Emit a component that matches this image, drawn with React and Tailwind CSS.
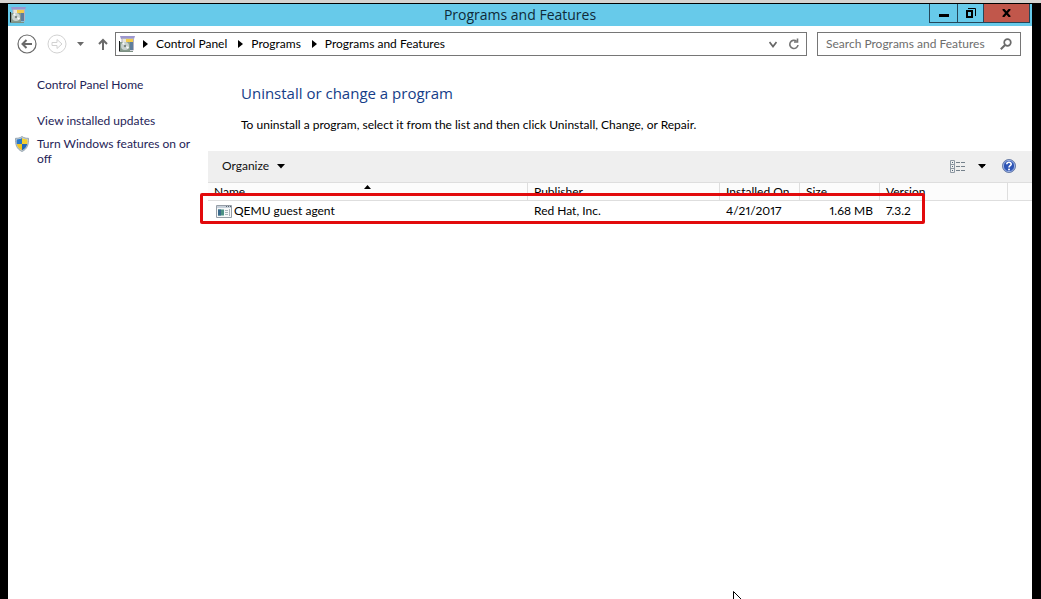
import React from "react";

function ProgramsIcon() {
  return (
    <svg width="16" height="16" viewBox="0 0 16 16" className="shrink-0" aria-hidden="true">
      <path d="M1 0H16L15 3H2Z" fill="#9d97cf" />
      <path d="M3 2.500H14.500V14H3Z" fill="#e9e6da" stroke="#b3b1c2" strokeWidth="1" />
      <path d="M7 3H14V9H7Z" fill="#f2cc4c" />
      <path d="M11 6H14V14H11Z" fill="#5e7d9c" />
      <path d="M1 6H11V15H1Z" fill="#869a8c" />
      <circle cx="6" cy="10" r="4" fill="#c9d2cf" />
      <path d="M6 10L3 7L5 6ZM6 10L10 11L9 13Z" fill="#f7faf8" />
      <circle cx="6" cy="10" r="1.2" fill="#7b8681" />
      <path d="M0.5 5V15.500" fill="none" stroke="#15191a" strokeWidth="1" />
      <path d="M1 15.5H14" stroke="#7c8f82" strokeWidth="1" />
    </svg>
  );
}

function Crumb({ children }) {
  return (
    <>
      <svg width="5" height="8" viewBox="0 0 5 8" className="shrink-0" aria-hidden="true">
        <path d="M0 0L5 4L0 8Z" fill="#000" />
      </svg>
      <a href="#" className="mr-[3px] whitespace-nowrap">{children}</a>
    </>
  );
}

function DownTriangle() {
  return (
    <svg width="8" height="5" viewBox="0 0 8 5" className="shrink-0" aria-hidden="true">
      <path d="M0 0H8L4 4.5Z" fill="#000" />
    </svg>
  );
}

function TitleBar() {
  return (
    <header className="flex h-[22px] bg-[#67caea]">
      <div className="flex flex-1 items-center pl-0.5">
        <ProgramsIcon />
      </div>
      <h1 className="font-['Open_Sans',sans-serif] text-sm leading-[22px] text-[#0f2a38]">Programs and Features</h1>
      <div className="flex flex-1 justify-end pr-0.5">
        <div className="flex h-[19px] border border-t-0 border-[#24475a]">
          <button aria-label="Minimize" className="flex w-7 items-center justify-center border-r border-[#24475a]">
            <svg width="10" height="3" viewBox="0 0 10 3" className="mt-1"><path d="M0 0H10V3H0Z" /></svg>
          </button>
          <button aria-label="Restore" className="flex w-[26px] items-center justify-center border-r border-[#24475a]">
            <svg width="10" height="10" viewBox="0 0 10 10">
              <path d="M1 3H6V9H1Z" fill="none" stroke="#000" strokeWidth="2" />
              <path d="M2 0.500H9.500V8" fill="none" stroke="#000" />
            </svg>
          </button>
          <button aria-label="Close" className="flex w-[45px] items-center justify-center bg-[#c1574b]">
            <svg width="9" height="8" viewBox="0 0 9 8"><path d="M1 0L8 8M8 0L1 8" stroke="#000" strokeWidth="2.2" /></svg>
          </button>
        </div>
      </div>
    </header>
  );
}

function NavigationBar() {
  return (
    <nav className="flex items-center py-1.5 pr-[11px] pl-[9px]">
      <button aria-label="Back">
        <svg width="20" height="20" viewBox="0 0 20 20" fill="none" stroke="#6a6a6a">
          <circle cx="10" cy="10" r="9" strokeWidth="1.2" />
          <path d="M15 10H6M9.500 6L5.500 10L9.500 14" strokeWidth="2" />
        </svg>
      </button>
      <button aria-label="Forward" className="ml-2.5">
        <svg width="20" height="20" viewBox="0 0 20 20" fill="none" stroke="#d2d2d2">
          <circle cx="10" cy="10" r="9" />
          <path d="M5 8.500H10V5.500L15 10L10 14.500V11.500H5Z" />
        </svg>
      </button>
      <button aria-label="Recent locations" className="ml-2.5">
        <svg width="7" height="20" viewBox="0 0 7 20"><path d="M0 8H7L3.500 12Z" fill="#6a6a6a" /></svg>
      </button>
      <button aria-label="Up" className="ml-3.5">
        <svg width="10" height="20" viewBox="0 0 10 20" fill="none" stroke="#6a6a6a" strokeWidth="2">
          <path d="M5 16V6M1 10L5 6L9 10" />
        </svg>
      </button>
      <div className="ml-[7px] flex h-6 flex-1 items-center gap-2 border border-[#767676] pr-[7px] pl-[3px]">
        <ProgramsIcon />
        <Crumb>Control Panel</Crumb>
        <Crumb>Programs</Crumb>
        <Crumb>Programs and Features</Crumb>
        <button aria-label="Previous locations" className="ml-auto">
          <svg width="8" height="7" viewBox="0 0 8 7" fill="none" stroke="#666" strokeWidth="1.700"><path d="M0.500 1L4 5.500L7.500 1" /></svg>
        </button>
        <button aria-label="Refresh" className="ml-1">
          <svg width="10" height="12" viewBox="0 0 10 12" fill="none" stroke="#757575" strokeWidth="1.600">
            <path d="M7.500 3.200A4.100 4.100 0 1 0 9 7" />
            <path d="M5 4H8.500V0.500" />
          </svg>
        </button>
      </div>
      <div className="ml-2.5 flex h-6 w-[204px] items-center border border-[#767676] pr-2 pl-2">
        <input
          type="text"
          aria-label="Search Programs and Features"
          placeholder="Search Programs and Features"
          className="min-w-0 flex-1 bg-transparent outline-none placeholder:text-[#6d6d6d]"
        />
        <svg width="12" height="12" viewBox="0 0 12 12" fill="none" stroke="#6a6a6a" aria-hidden="true">
          <circle cx="7.500" cy="4.500" r="3.300" strokeWidth="1.700" />
          <path d="M5 7L0.800 11.200" strokeWidth="2" />
        </svg>
      </div>
    </nav>
  );
}

function Shield() {
  return (
    <svg width="14" height="16" viewBox="0 0 14 16" className="shrink-0" aria-hidden="true">
      <path d="M7 0.500C9 2 11 2.300 13.500 2.300C13.700 8.500 12.500 13 7 15.500C1.500 13 0.300 8.500 0.500 2.300C3 2.300 5 2 7 0.500Z" fill="#c4ced6" stroke="#8797a3" strokeWidth="0.800" />
      <path d="M7 2V8H1.800C1.600 6.500 1.600 5 1.700 3.500C4 3.400 5.500 3 7 2Z" fill="#2b78c8" />
      <path d="M7 2V8H12.200C12.400 6.500 12.400 5 12.300 3.500C10 3.400 8.500 3 7 2Z" fill="#f5d02e" />
      <path d="M7 8V14.300C3.800 12.700 2.300 10.600 1.800 8Z" fill="#f1c522" />
      <path d="M7 8V14.300C10.200 12.700 11.700 10.600 12.200 8Z" fill="#2468b6" />
    </svg>
  );
}

function Sidebar() {
  return (
    <aside className="flex w-[200px] shrink-0 flex-col pt-[15px] pr-1 pl-[7px] leading-[15px] text-[#1e2357]">
      <a href="#" className="ml-[22px]">Control Panel Home</a>
      <a href="#" className="mt-[21px] ml-[22px]">View installed updates</a>
      <a href="#" className="mt-2 flex gap-2">
        <Shield />
        <span>Turn Windows features on or off</span>
      </a>
    </aside>
  );
}

function Toolbar() {
  return (
    <div className="flex h-[31px] items-center bg-[#efefef] pr-4 pb-px pl-3.5 text-[#111]">
      <button className="flex items-center gap-2">
        Organize
        <DownTriangle />
      </button>
      <button aria-label="Change your view" className="ml-auto">
        <svg width="16" height="13" viewBox="0 0 16 13" fill="none">
          <path d="M0.500 0.500H4.500V12.500H0.500ZM0.500 4.500H4.500M0.500 8.500H4.500" stroke="#8e99a3" />
          <path d="M2 2.500H3M2 6.500H3M2 10.500H3" stroke="#4f6578" />
          <path d="M6 2.500H10M11 2.500H15M6 6.500H10M11 6.500H15M6 10.500H10M11 10.500H15" stroke="#75818b" />
        </svg>
      </button>
      <button aria-label="More view options" className="ml-3">
        <DownTriangle />
      </button>
      <button aria-label="Help" className="ml-4">
        <svg width="14" height="14" viewBox="0 0 14 14">
          <circle cx="7" cy="7" r="6.500" fill="#2d54b5" stroke="#6d7fa8" />
          <circle cx="7" cy="7" r="5.600" fill="none" stroke="#b8c9ee" strokeWidth="0.800" />
          <path d="M4.800 5.300C4.900 2.500 9.300 2.700 9.200 5.200C9.100 6.700 7 6.700 7 8.500" fill="none" stroke="#fff" strokeWidth="1.600" />
          <circle cx="7" cy="10.500" r="1" fill="#fff" />
        </svg>
      </button>
    </div>
  );
}

function ProgramFileIcon() {
  return (
    <svg width="16" height="13" viewBox="0 0 16 13" className="shrink-0" aria-hidden="true">
      <path d="M0.500 0.500H15.500V12.500H0.500Z" fill="#f6f8f9" stroke="#959da6" />
      <path d="M1 1H15V3H1Z" fill="#c7d0da" />
      <path d="M10 1.500H11M12 1.500H13M14 1.500H15" stroke="#59636d" />
      <path d="M2 4.500H8V10.500H2Z" fill="#4b9184" />
      <path d="M2 4.500H5V10.500H2Z" fill="#39698c" />
      <path d="M9 5.500H12M9 7.500H12M9 9.500H12M13.500 4V11" stroke="#a9b3bb" />
    </svg>
  );
}

const columns = ["Name", "Publisher", "Installed On", "Size", "Version"];

function ProgramTable() {
  return (
    <div className="relative">
      <table className="w-full table-fixed border-separate border-spacing-0 text-left">
        <colgroup>
          <col className="w-[320px]" />
          <col className="w-[192px]" />
          <col className="w-[80px]" />
          <col className="w-[80px]" />
          <col className="w-[128px]" />
          <col />
        </colgroup>
        <thead>
          <tr className="h-[19px] bg-[#fcfcfc] leading-[17px]">
            {columns.map((name) => (
              <th key={name} scope="col" className="border-y border-r border-[#dedede] py-0 pl-1.5 font-normal whitespace-nowrap">
                {name === "Name" ? (
                  <span className="flex">
                    <span className="w-[150px]">Name</span>
                    <svg width="7" height="4" viewBox="0 0 7 4" className="mt-0.5" aria-hidden="true"><path d="M0 4L3.500 0L7 4Z" /></svg>
                  </span>
                ) : name}
              </th>
            ))}
            <td className="border-y border-[#dedede]"></td>
          </tr>
        </thead>
        <tbody>
          <tr className="h-5">
            <td className="p-0 pl-2">
              <span className="flex items-center gap-0.5"><ProgramFileIcon />QEMU guest agent</span>
            </td>
            <td className="p-0 pl-1.5">Red Hat, Inc.</td>
            <td className="p-0 pl-1.5">4/21/2017</td>
            <td className="p-0 pr-[7px] text-right">1.68 MB</td>
            <td className="p-0 pl-1.5">7.3.2</td>
            <td></td>
          </tr>
        </tbody>
      </table>
      <div className="pointer-events-none absolute top-[11px] -left-2 h-[31px] w-[725px] rounded-xs border-3 border-[#e20a0c]"></div>
    </div>
  );
}

export default function App() {
  return (
    <div className="flex min-h-screen flex-col border-t-3 border-[#d5d3d0] bg-black pt-px pr-[9px] pl-2 font-[Lato,sans-serif] text-xs leading-4 text-black proportional-nums">
      <TitleBar />
      <div className="relative flex flex-1 flex-col bg-white">
        <NavigationBar />
        <div className="flex flex-1">
          <Sidebar />
          <main className="min-w-0 flex-1 pt-[19px]">
            <div className="pl-[33px]">
              <h2 className="font-['Open_Sans',sans-serif] text-[15px] leading-6 text-[#153d88]">Uninstall or change a program</h2>
              <p className="mt-3 mb-[18px]">To uninstall a program, select it from the list and then click Uninstall, Change, or Repair.</p>
            </div>
            <Toolbar />
            <ProgramTable />
          </main>
        </div>
        <svg width="8" height="8" viewBox="0 0 8 8" className="absolute bottom-0 left-[725px]" aria-hidden="true">
          <path d="M0.500 8V0.500L8 8" fill="#fff" stroke="#000" />
        </svg>
      </div>
    </div>
  );
}
